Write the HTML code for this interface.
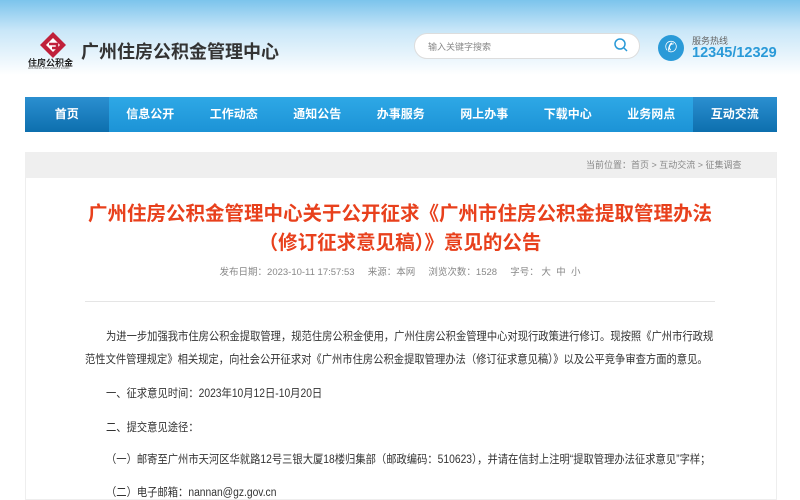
<!DOCTYPE html><html><head><meta charset="utf-8"><style>
body{margin:0;width:800px;height:500px;overflow:hidden;font-family:"Liberation Sans","Noto Sans CJK SC",sans-serif;background:linear-gradient(#7cc4ec 0,#c8e6f8 30px,#fff 75px,#fff);position:relative}
.a{position:absolute;white-space:nowrap}
.nav{position:absolute;left:25px;top:97px;width:752px;height:35px;background:linear-gradient(#2ea8e6,#1c93d6);display:flex;border-radius:2px}
.nav div{width:83.5px;text-align:center;line-height:35px;color:#fff;font-size:12px;font-weight:bold}
.nav .d{background:linear-gradient(#2b8fd0,#0d6fae)}
.p{position:absolute;font-size:11.5px;color:#333;white-space:nowrap;transform:scaleX(0.895);transform-origin:0 0}
</style></head><body>
<svg class="a" style="left:38px;top:30px" width="30" height="30" viewBox="0 0 30 30"><path d="M15 2 L28 15 L15 28 L2 15Z" fill="#c0203a"/><path d="M15 8 L22 15 L15 22 L8 15Z" fill="#fff"/><path d="M11 14 h8 v4 h-5" stroke="#c0203a" stroke-width="2.5" fill="none"/></svg>
<div class="a" style="left:28px;top:56px;font-size:9px;font-weight:bold;color:#222">住房公积金</div>
<div class="a" style="left:28px;top:66px;font-size:3px;color:#555">HOUSING PROVIDENT FUND</div>
<div class="a" style="left:81px;top:38px;font-size:18px;font-weight:bold;color:#333">广州住房公积金管理中心</div>
<div class="a" style="left:414px;top:33px;width:224px;height:24px;border:1px solid #ddd;border-radius:13px;background:#fff"></div>
<div class="a" style="left:428px;top:40px;font-size:9px;color:#888">输入关键字搜索</div>
<svg class="a" style="left:613px;top:37px" width="16" height="16"><circle cx="7" cy="7" r="5" stroke="#2a9ad8" stroke-width="1.5" fill="none"/><path d="M11 11l3 3" stroke="#2a9ad8" stroke-width="1.5"/></svg>
<div class="a" style="left:658px;top:35px;width:26px;height:26px;border-radius:50%;background:#2a9ad8;color:#fff;font-size:15px;text-align:center;line-height:26px">✆</div>
<div class="a" style="left:692px;top:34px;font-size:9px;color:#666">服务热线</div>
<div class="a" style="left:692px;top:45px;font-size:14.5px;font-weight:bold;color:#2a9ad8">12345/12329</div>
<div class="nav"><div class="d">首页</div><div>信息公开</div><div>工作动态</div><div>通知公告</div><div>办事服务</div><div>网上办事</div><div>下载中心</div><div>业务网点</div><div class="d">互动交流</div></div>
<div class="a" style="left:25px;top:152px;width:750px;height:346px;border:1px solid #eee;background:#fff"></div>
<div class="a" style="left:25px;top:152px;width:751px;height:26px;background:#efefef"></div>
<div class="a" style="left:586px;top:158px;font-size:9px;color:#888">当前位置：首页 &gt; 互动交流 &gt; 征集调查</div>
<div class="a" style="left:0;width:800px;top:200px;text-align:center;font-size:19.5px;font-weight:bold;color:#e8401c;line-height:29px">广州住房公积金管理中心关于公开征求《广州市住房公积金提取管理办法<br>（修订征求意见稿）》意见的公告</div>
<div class="a" style="left:0;width:800px;top:264px;text-align:center;font-size:9.5px;color:#888">发布日期：2023-10-11 17:57:53 &nbsp;&nbsp;&nbsp; 来源：本网 &nbsp;&nbsp;&nbsp; 浏览次数：1528 &nbsp;&nbsp;&nbsp; 字号： 大 &nbsp;中 &nbsp;小</div>
<div class="a" style="left:85px;top:301px;width:630px;height:1px;background:#e5e5e5"></div>
<div class="p" style="left:106px;top:328px">为进一步加强我市住房公积金提取管理，规范住房公积金使用，广州住房公积金管理中心对现行政策进行修订。现按照《广州市行政规</div>
<div class="p" style="left:85px;top:351px">范性文件管理规定》相关规定，向社会公开征求对《广州市住房公积金提取管理办法（修订征求意见稿）》以及公平竞争审查方面的意见。</div>
<div class="p" style="left:106px;top:385px">一、征求意见时间：2023年10月12日-10月20日</div>
<div class="p" style="left:106px;top:419px">二、提交意见途径：</div>
<div class="p" style="left:106px;top:451px">（一）邮寄至广州市天河区华就路12号三银大厦18楼归集部（邮政编码：510623），并请在信封上注明“提取管理办法征求意见”字样；</div>
<div class="p" style="left:106px;top:484px">（二）电子邮箱：nannan@gz.gov.cn</div>
</body></html>
